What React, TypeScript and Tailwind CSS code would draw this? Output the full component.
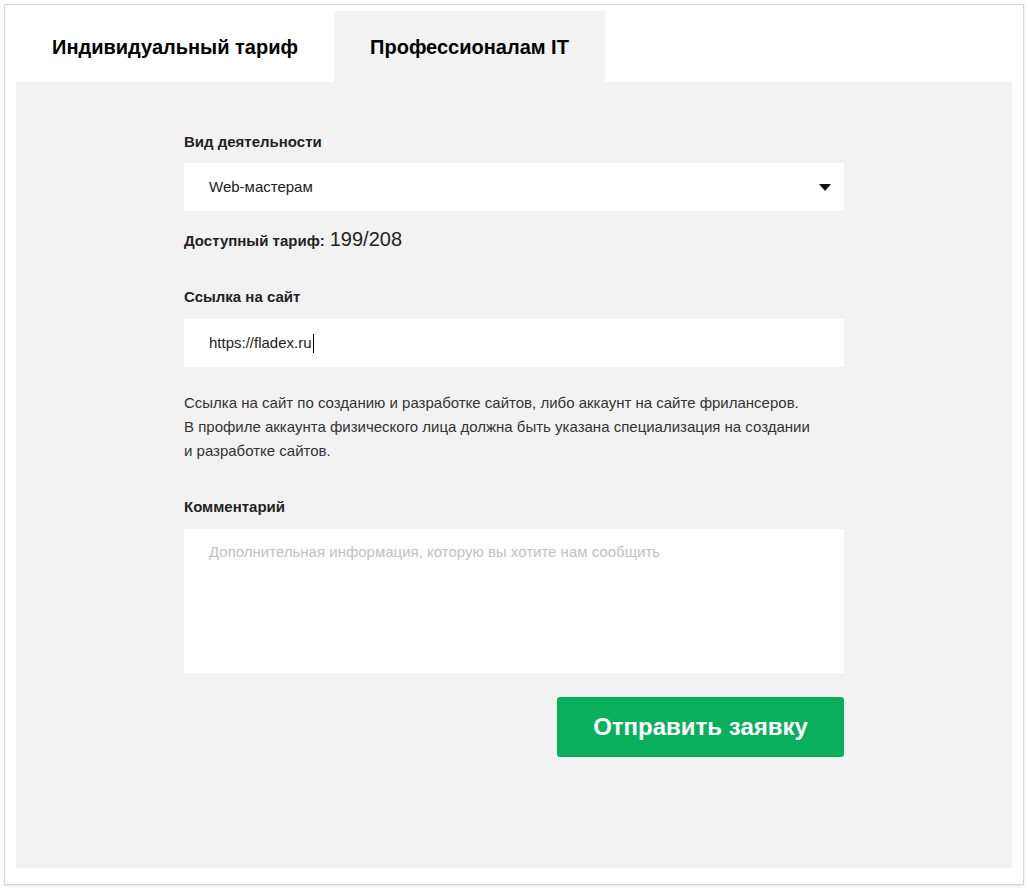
import { useState } from 'react';

const tabs = [
  { title: 'Индивидуальный тариф', width: 'w-[318px]' },
  { title: 'Профессионалам IT', width: 'w-[271px]' },
];

export default function App() {
  const [active, setActive] = useState(1);

  return (
    <div className="min-h-screen bg-white p-[4px]" style={{ fontFamily: '"Liberation Sans", Arial, sans-serif' }}>
      <div className="w-[1020px] h-[881px] border border-[#d6d6d6] shadow-[0_1px_2px_rgba(0,0,0,0.12)] bg-white px-[11px] pt-[6px] flex flex-col">
        <div className="flex h-[71px]">
          {tabs.map((t, i) => (
            <button
              key={t.title}
              onClick={() => setActive(i)}
              className={
                i === active
                  ? `${t.width} h-full bg-[#f2f2f2] text-[20px] font-bold text-black`
                  : `${t.width} h-full bg-white text-[20px] font-bold text-black`
              }
            >
              {t.title}
            </button>
          ))}
        </div>

        <div className="h-[786px] bg-[#f2f2f2] pt-[50px] pl-[168px]">
          <div className="w-[660px] flex flex-col text-[#333]">
            <label className="text-[15px] leading-[20px] font-bold text-[#222]">Вид деятельности</label>
            <div className="mt-[11px] h-[48px] bg-white flex items-center justify-between pl-[25px] pr-[13px] text-[15px] text-[#222]">
              <span>Web-мастерам</span>
              <svg width="12" height="7" viewBox="0 0 12 7">
                <path d="M0 0h12L6 7z" fill="#111" />
              </svg>
            </div>

            <div className="mt-[13px] h-[24px] flex items-baseline gap-[5px] text-[#222]">
              <span className="text-[15px] font-bold">Доступный тариф:</span>
              <span className="text-[20px]">199/208</span>
            </div>

            <label className="mt-[39px] text-[15px] leading-[20px] font-bold text-[#222]">Ссылка на сайт</label>
            <div className="mt-[12px] h-[48px] bg-white flex items-center pl-[25px] text-[15px] text-[#222]">
              <span>https://fladex.ru</span>
              <span className="ml-[1px] w-[1px] h-[19px] bg-black" />
            </div>

            <p className="mt-[24px] text-[15px] leading-[24px] text-[#333]">
              Ссылка на сайт по созданию и разработке сайтов, либо аккаунт на сайте фрилансеров.
              <br />
              В профиле аккаунта физического лица должна быть указана специализация на создании
              <br />
              и разработке сайтов.
            </p>

            <label className="mt-[34px] text-[15px] leading-[20px] font-bold text-[#222]">Комментарий</label>
            <textarea
              className="mt-[12px] h-[144px] bg-white resize-none outline-none px-[25px] pt-[13px] text-[15px] leading-[20px] text-[#222] placeholder:text-[#c2c2c2]"
              placeholder="Дополнительная информация, которую вы хотите нам сообщить"
            />

            <div className="mt-[24px] flex justify-end">
              <button className="w-[287px] h-[60px] rounded-[3px] bg-[#0aaf5c] text-white text-[24px] font-bold">
                Отправить заявку
              </button>
            </div>
          </div>
        </div>
      </div>
    </div>
  );
}
